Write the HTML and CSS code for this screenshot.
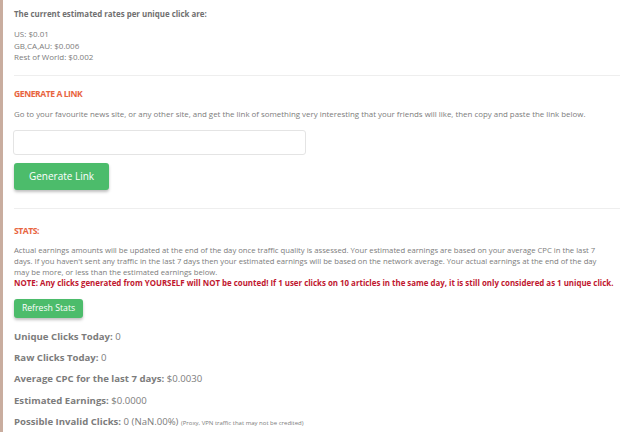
FILE: index.html
```html
<!DOCTYPE html>
<html>
<head>
<meta charset="utf-8">
<link rel="stylesheet" href="styles.css">
</head>
<body>
<div class="panel">
  <section class="rates">
    <p class="rates-title">The current estimated rates per unique click are:</p>
    <p class="rates-list">US: $0.01<br>GB,CA,AU: $0.006<br>Rest of World: $0.002</p>
  </section>
  <hr class="divider">
  <section class="generate">
    <h2 class="heading">GENERATE A LINK</h2>
    <p class="desc">Go to your favourite news site, or any other site, and get the link of something very interesting that your friends will like, then copy and paste the link below.</p>
    <input class="link-input" type="text">
    <button class="btn btn-large">Generate Link</button>
  </section>
  <hr class="divider divider-2">
  <section class="stats">
    <h2 class="heading">STATS:</h2>
    <p class="desc stats-desc"><span class="stats-text">Actual earnings amounts will be updated at the end of the day once traffic quality is assessed. Your estimated earnings are based on your average CPC in the last 7 days. If you haven't sent any traffic in the last 7 days then your estimated earnings will be based on the network average. Your actual earnings at the end of the day<br>may be more, or less than the estimated earnings below.</span><br><strong class="note">NOTE: Any clicks generated from YOURSELF will NOT be counted! If 1 user clicks on 10 articles in the same day, it is still only considered as 1 unique click.</strong></p>
    <button class="btn btn-small">Refresh Stats</button>
    <ul class="stat-list">
      <li><b>Unique Clicks Today:</b> 0</li>
      <li><b>Raw Clicks Today:</b> 0</li>
      <li><b>Average CPC for the last 7 days:</b> $0.0030</li>
      <li><b>Estimated Earnings:</b> $0.0000</li>
      <li><b>Possible Invalid Clicks:</b> 0 (NaN.00%) <small class="hint">(Proxy, VPN traffic that may not be credited)</small></li>
    </ul>
  </section>
</div>
</body>
</html>
```
FILE: styles.css
```css
html, body {
  margin: 0;
  padding: 0;
  background: #fff;
}
body {
  font-family: "Open Sans", "Liberation Sans", sans-serif;
  color: #7c7c7c;
  border-left: 3px solid #c9ad9f;
  min-height: 432px;
  box-sizing: border-box;
}
.panel {
  padding: 9px 8px 0 11px;
}
p { margin: 0; }
.rates-title {
  font-size: 7.9px;
  font-weight: 700;
  line-height: 10px;
  color: #707070;
}
.rates-list {
  margin-top: 9px;
  font-size: 8px;
  line-height: 11.5px;
}
.divider {
  border: 0;
  border-top: 1px solid #eeeeee;
  margin: 12px 0 0 0;
}
.heading {
  margin: 12px 0 0 0;
  font-size: 8.6px;
  line-height: 12px;
  font-weight: 700;
  color: #e8653f;
  letter-spacing: -0.45px;
}
.desc {
  font-size: 7.9px;
  line-height: 12px;
  margin-top: 8px;
}
.link-input {
  display: block;
  width: 293px;
  height: 25px;
  box-sizing: border-box;
  margin: 10px 0 0 -1px;
  border: 1px solid #e4e4e4;
  border-radius: 3px;
  background: #fff;
}
.btn {
  display: block;
  border: 0;
  background: #4cbc6b;
  color: #fff;
  font-family: "Open Sans", "Liberation Sans", sans-serif;
  box-shadow: 0 2px 3px rgba(0,0,0,0.25);
  padding: 0;
}
.btn-large {
  width: 95px;
  height: 27px;
  margin-top: 8px;
  border-radius: 3px;
  font-size: 10px;
}
.divider-2 { margin-top: 18px; }
.stats .heading { margin-top: 16px; }
.stats-desc {
  margin-top: 8.5px;
  font-size: 7.7px;
  line-height: 11px;
}
.stats-text {
  display: inline-block;
  width: 600px;
}
.note {
  color: #c0172f;
  font-weight: 700;
  font-size: 7.9px;
}
.btn-small {
  width: 69px;
  height: 19px;
  margin-top: 9.5px;
  border-radius: 3px;
  font-size: 8.7px;
}
.stat-list {
  list-style: none;
  margin: 8.4px 0 0 0;
  padding: 0;
}
.stat-list li {
  font-size: 9.6px;
  line-height: 21.3px;
}
.stat-list b { font-weight: 700; }
.hint { font-size: 6px; }
```
